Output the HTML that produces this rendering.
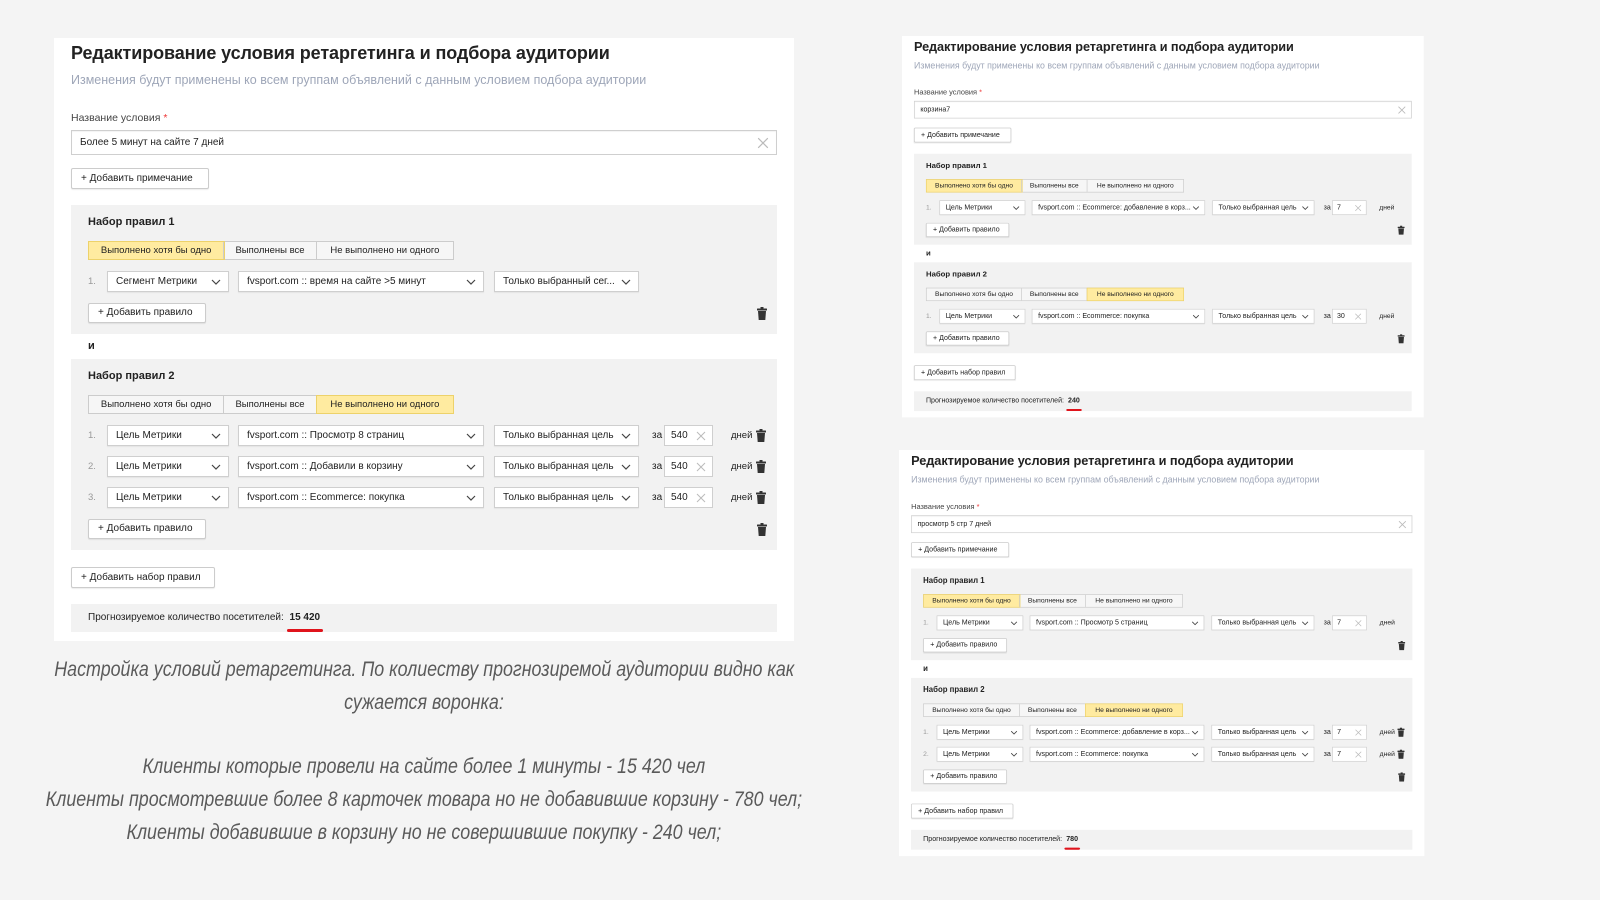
<!DOCTYPE html>
<html><head><meta charset="utf-8">
<style>
*{box-sizing:border-box;margin:0;padding:0}
body{width:1600px;height:900px;background:#f4f4f4;position:relative;overflow:hidden;font-family:"Liberation Sans",sans-serif;color:#222}
.panel{position:absolute;width:740px;background:#fff;padding:4px 17px 9px;transform-origin:0 0}
.title{font-size:18px;font-weight:bold;line-height:22px;color:#222;letter-spacing:-0.1px}
.sub{font-size:12.5px;color:#9ea6b8;line-height:16px;margin-top:8px}
.lbl{font-size:10.5px;color:#444;line-height:14px;margin-top:23px}
.lbl b{color:#e33;font-weight:normal}
.inp{margin-top:5px;height:25px;border:1px solid #cfcfcf;box-shadow:inset 0 1px 1px rgba(0,0,0,.05);font-size:10px;line-height:23px;padding-left:8px;position:relative}
.x{position:absolute;right:7px;top:6px}
.btn{display:inline-block;height:21px;border:1px solid #ccc;border-radius:2px;background:#fff;font-size:10px;line-height:19px;padding:0 9px;color:#222;box-shadow:0 1px 1px rgba(0,0,0,.08)}
.note{margin-top:13px;width:138px}
.rs{background:#f2f2f2;padding:7px 10px 11px 17px;position:relative}
.rs h4{font-size:11px;font-weight:bold;line-height:20px}
.seg{display:flex;margin-top:9px;height:19px;width:366px;border:1px solid #ccc;font-size:9.5px;line-height:17px;background:#f6f6f6}
.seg div{text-align:center;border-right:1px solid #ccc}
.seg div:last-child{border-right:none}
.seg .on{background:#ffeba0;box-shadow:0 0 0 1px #edd26a}
.row{display:flex;align-items:center;height:21px;margin-top:10px;font-size:10px}
.row>*{flex-shrink:0}
.row.first{margin-top:11px}
.num{width:19px;color:#999;font-size:9.5px}
.sel{height:21px;border:1px solid #cfcfcf;background:#fff;line-height:19px;padding-left:8px;position:relative;white-space:nowrap;overflow:hidden;box-shadow:0 1px 1px rgba(0,0,0,.06)}
.sel svg{position:absolute;right:7px;top:7px}
.s1{width:122px}.s2{width:246px;margin-left:9px}.s3{width:145px;margin-left:10px}
.za{margin-left:13px;width:12px}
.days{width:49px;height:21px;border:1px solid #cfcfcf;background:#fff;line-height:19px;padding-left:6px;position:relative}
.days svg{position:absolute;right:6px;top:5px}
.dn{margin-left:18px;width:25px;font-size:9.5px}
.addr{display:flex;justify-content:space-between;align-items:center;margin-top:11px}
.addr .btn{height:20px;line-height:18px;width:118px}
.and{height:25px;line-height:25px;font-size:11px;font-weight:bold;padding-left:17px}
.addset{margin-top:17px;width:144px}
.fc{margin-top:16px;height:28px;background:#f2f2f2;font-size:10px;line-height:28px;padding-left:17px}
.fc b{position:relative;margin-left:3px}
.fc b:after{content:"";position:absolute;left:-3px;right:-3px;bottom:-9px;height:3px;border-radius:2px;background:#e0141c}
.cap{position:absolute;left:-276px;width:1400px;text-align:center;font-size:21px;font-style:italic;color:#5a5a5a;line-height:32px}
.cap span{display:inline-block;transform:scaleX(.85);white-space:nowrap}
</style></head><body>

<svg width="0" height="0" style="position:absolute">
<defs>
<symbol id="ch" viewBox="0 0 10 6"><path d="M1 1l4 4 4-4" stroke="#444" fill="none" stroke-width="1.2"/></symbol>
<symbol id="tr" viewBox="0 0 10 13"><rect x="3.5" y="0" width="3" height="2" fill="#333"/><rect x="0" y="1.5" width="10" height="2" rx=".5" fill="#333"/><path d="M1 4h8l-.7 9H1.7z" fill="#333"/></symbol>
<symbol id="xx" viewBox="0 0 10 10"><path d="M1 1l8 8M9 1l-8 8" stroke="#bbb" stroke-width="1"/></symbol>
</defs></svg>

<!-- LEFT PANEL -->
<div class="panel" style="left:54px;top:38px">
<div class="title">Редактирование условия ретаргетинга и подбора аудитории</div>
<div class="sub">Изменения будут применены ко всем группам объявлений с данным условием подбора аудитории</div>
<div class="lbl">Название условия <b>*</b></div>
<div class="inp">Более 5 минут на сайте 7 дней<svg class="x" width="12" height="12"><use href="#xx"/></svg></div>
<div class="btn note">+ Добавить примечание</div>
<div class="rs" style="margin-top:16px">
<h4>Набор правил 1</h4>
<div class="seg"><div class="on" style="width:136px">Выполнено хотя бы одно</div><div style="width:93px">Выполнены все</div><div style="width:137px">Не выполнено ни одного</div></div>
<div class="row first"><span class="num">1.</span><div class="sel s1">Сегмент Метрики<svg width="10" height="6"><use href="#ch"/></svg></div><div class="sel s2">fvsport.com :: время на сайте &gt;5 минут<svg width="10" height="6"><use href="#ch"/></svg></div><div class="sel s3">Только выбранный сег...<svg width="10" height="6"><use href="#ch"/></svg></div></div>
<div class="addr"><div class="btn">+ Добавить правило</div><svg width="10" height="13"><use href="#tr"/></svg></div>
</div>
<div class="and">и</div>
<div class="rs">
<h4>Набор правил 2</h4>
<div class="seg"><div style="width:136px">Выполнено хотя бы одно</div><div style="width:93px">Выполнены все</div><div class="on" style="width:137px">Не выполнено ни одного</div></div>
<div class="row first"><span class="num">1.</span><div class="sel s1">Цель Метрики<svg width="10" height="6"><use href="#ch"/></svg></div><div class="sel s2">fvsport.com :: Просмотр 8 страниц<svg width="10" height="6"><use href="#ch"/></svg></div><div class="sel s3">Только выбранная цель<svg width="10" height="6"><use href="#ch"/></svg></div><span class="za">за</span><div class="days">540<svg width="10" height="10"><use href="#xx"/></svg></div><span class="dn">дней</span><svg width="10" height="13"><use href="#tr"/></svg></div>
<div class="row"><span class="num">2.</span><div class="sel s1">Цель Метрики<svg width="10" height="6"><use href="#ch"/></svg></div><div class="sel s2">fvsport.com :: Добавили в корзину<svg width="10" height="6"><use href="#ch"/></svg></div><div class="sel s3">Только выбранная цель<svg width="10" height="6"><use href="#ch"/></svg></div><span class="za">за</span><div class="days">540<svg width="10" height="10"><use href="#xx"/></svg></div><span class="dn">дней</span><svg width="10" height="13"><use href="#tr"/></svg></div>
<div class="row"><span class="num">3.</span><div class="sel s1">Цель Метрики<svg width="10" height="6"><use href="#ch"/></svg></div><div class="sel s2">fvsport.com :: Ecommerce: покупка<svg width="10" height="6"><use href="#ch"/></svg></div><div class="sel s3">Только выбранная цель<svg width="10" height="6"><use href="#ch"/></svg></div><span class="za">за</span><div class="days">540<svg width="10" height="10"><use href="#xx"/></svg></div><span class="dn">дней</span><svg width="10" height="13"><use href="#tr"/></svg></div>
<div class="addr"><div class="btn">+ Добавить правило</div><svg width="10" height="13"><use href="#tr"/></svg></div>
</div>
<div class="btn addset">+ Добавить набор правил</div>
<div class="fc">Прогнозируемое количество посетителей: <b>15 420</b></div>
</div>

<!-- RIGHT TOP PANEL -->
<div class="panel" style="left:902px;top:36px;transform:scale(.705)">
<div class="title">Редактирование условия ретаргетинга и подбора аудитории</div>
<div class="sub">Изменения будут применены ко всем группам объявлений с данным условием подбора аудитории</div>
<div class="lbl">Название условия <b>*</b></div>
<div class="inp">корзина7<svg class="x" width="12" height="12"><use href="#xx"/></svg></div>
<div class="btn note">+ Добавить примечание</div>
<div class="rs" style="margin-top:16px">
<h4>Набор правил 1</h4>
<div class="seg"><div class="on" style="width:136px">Выполнено хотя бы одно</div><div style="width:93px">Выполнены все</div><div style="width:137px">Не выполнено ни одного</div></div>
<div class="row first"><span class="num">1.</span><div class="sel s1">Цель Метрики<svg width="10" height="6"><use href="#ch"/></svg></div><div class="sel s2">fvsport.com :: Ecommerce: добавление в корз...<svg width="10" height="6"><use href="#ch"/></svg></div><div class="sel s3">Только выбранная цель<svg width="10" height="6"><use href="#ch"/></svg></div><span class="za">за</span><div class="days">7<svg width="10" height="10"><use href="#xx"/></svg></div><span class="dn">дней</span></div>
<div class="addr"><div class="btn">+ Добавить правило</div><svg width="10" height="13"><use href="#tr"/></svg></div>
</div>
<div class="and">и</div>
<div class="rs">
<h4>Набор правил 2</h4>
<div class="seg"><div style="width:136px">Выполнено хотя бы одно</div><div style="width:93px">Выполнены все</div><div class="on" style="width:137px">Не выполнено ни одного</div></div>
<div class="row first"><span class="num">1.</span><div class="sel s1">Цель Метрики<svg width="10" height="6"><use href="#ch"/></svg></div><div class="sel s2">fvsport.com :: Ecommerce: покупка<svg width="10" height="6"><use href="#ch"/></svg></div><div class="sel s3">Только выбранная цель<svg width="10" height="6"><use href="#ch"/></svg></div><span class="za">за</span><div class="days">30<svg width="10" height="10"><use href="#xx"/></svg></div><span class="dn">дней</span></div>
<div class="addr"><div class="btn">+ Добавить правило</div><svg width="10" height="13"><use href="#tr"/></svg></div>
</div>
<div class="btn addset">+ Добавить набор правил</div>
<div class="fc">Прогнозируемое количество посетителей: <b>240</b></div>
</div>

<!-- RIGHT BOTTOM PANEL -->
<div class="panel" style="left:899px;top:450px;transform:scale(.71)">
<div class="title">Редактирование условия ретаргетинга и подбора аудитории</div>
<div class="sub">Изменения будут применены ко всем группам объявлений с данным условием подбора аудитории</div>
<div class="lbl">Название условия <b>*</b></div>
<div class="inp">просмотр 5 стр 7 дней<svg class="x" width="12" height="12"><use href="#xx"/></svg></div>
<div class="btn note">+ Добавить примечание</div>
<div class="rs" style="margin-top:16px">
<h4>Набор правил 1</h4>
<div class="seg"><div class="on" style="width:136px">Выполнено хотя бы одно</div><div style="width:93px">Выполнены все</div><div style="width:137px">Не выполнено ни одного</div></div>
<div class="row first"><span class="num">1.</span><div class="sel s1">Цель Метрики<svg width="10" height="6"><use href="#ch"/></svg></div><div class="sel s2">fvsport.com :: Просмотр 5 страниц<svg width="10" height="6"><use href="#ch"/></svg></div><div class="sel s3">Только выбранная цель<svg width="10" height="6"><use href="#ch"/></svg></div><span class="za">за</span><div class="days">7<svg width="10" height="10"><use href="#xx"/></svg></div><span class="dn">дней</span></div>
<div class="addr"><div class="btn">+ Добавить правило</div><svg width="10" height="13"><use href="#tr"/></svg></div>
</div>
<div class="and">и</div>
<div class="rs">
<h4>Набор правил 2</h4>
<div class="seg"><div style="width:136px">Выполнено хотя бы одно</div><div style="width:93px">Выполнены все</div><div class="on" style="width:137px">Не выполнено ни одного</div></div>
<div class="row first"><span class="num">1.</span><div class="sel s1">Цель Метрики<svg width="10" height="6"><use href="#ch"/></svg></div><div class="sel s2">fvsport.com :: Ecommerce: добавление в корз...<svg width="10" height="6"><use href="#ch"/></svg></div><div class="sel s3">Только выбранная цель<svg width="10" height="6"><use href="#ch"/></svg></div><span class="za">за</span><div class="days">7<svg width="10" height="10"><use href="#xx"/></svg></div><span class="dn">дней</span><svg width="10" height="13"><use href="#tr"/></svg></div>
<div class="row"><span class="num">2.</span><div class="sel s1">Цель Метрики<svg width="10" height="6"><use href="#ch"/></svg></div><div class="sel s2">fvsport.com :: Ecommerce: покупка<svg width="10" height="6"><use href="#ch"/></svg></div><div class="sel s3">Только выбранная цель<svg width="10" height="6"><use href="#ch"/></svg></div><span class="za">за</span><div class="days">7<svg width="10" height="10"><use href="#xx"/></svg></div><span class="dn">дней</span><svg width="10" height="13"><use href="#tr"/></svg></div>
<div class="addr"><div class="btn">+ Добавить правило</div><svg width="10" height="13"><use href="#tr"/></svg></div>
</div>
<div class="btn addset">+ Добавить набор правил</div>
<div class="fc">Прогнозируемое количество посетителей: <b>780</b></div>
</div>

<!-- CAPTION -->
<div class="cap" style="top:654px"><span>Настройка условий ретаргетинга. По колиеству прогнозиремой аудитории видно как</span></div>
<div class="cap" style="top:687px"><span>сужается воронка:</span></div>
<div class="cap" style="top:751px"><span>Клиенты которые провели на сайте более 1 минуты - 15 420 чел</span></div>
<div class="cap" style="top:784px"><span>Клиенты просмотревшие более 8 карточек товара но не добавившие корзину - 780 чел;</span></div>
<div class="cap" style="top:817px"><span>Клиенты добавившие в корзину но не совершившие покупку - 240 чел;</span></div>

</body></html>
